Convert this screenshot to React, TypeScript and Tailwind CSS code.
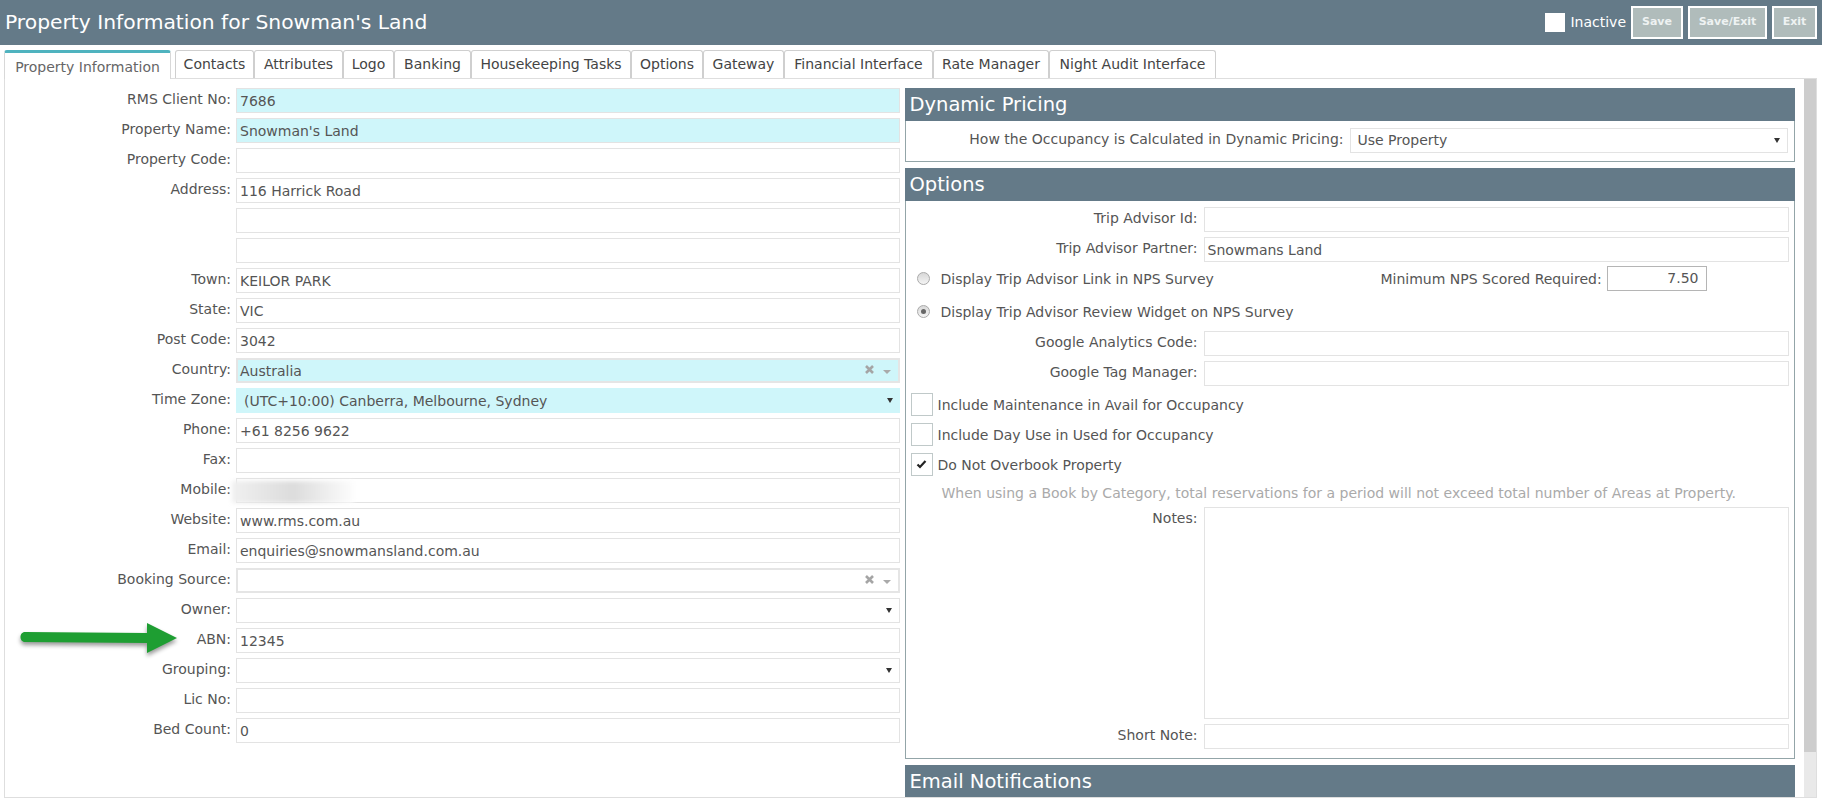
import { ReactNode } from "react";

const font = "font-['DejaVu_Sans','Liberation_Sans',sans-serif]";

const tabs = [
  { label: "Contacts", w: "w-[79px]" },
  { label: "Attributes", w: "w-[89px]" },
  { label: "Logo", w: "w-[51px]" },
  { label: "Banking", w: "w-[77px]" },
  { label: "Housekeeping Tasks", w: "w-[160px]" },
  { label: "Options", w: "w-[72px]" },
  { label: "Gateway", w: "w-[81px]" },
  { label: "Financial Interface", w: "w-[149px]" },
  { label: "Rate Manager", w: "w-[116px]" },
  { label: "Night Audit Interface", w: "w-[167px]" },
];

const Arrow = () => (
  <svg className="h-[5px] w-[6px]" viewBox="0 0 6 5">
    <path d="M0 0H6L3 5Z" fill="#333" />
  </svg>
);

function TextBox({ value = "", cyan = false }: { value?: string; cyan?: boolean }) {
  return (
    <div
      className={`h-[25px] flex-1 border border-[#e3e3e3] pl-[3px] pt-[2px] text-[14px] leading-[21px] text-[#555] ${cyan ? "bg-[#cff6fa]" : "bg-white"}`}
    >
      {value}
    </div>
  );
}

function SelectBox({ value = "", cyan = false }: { value?: string; cyan?: boolean }) {
  return (
    <div
      className={`flex h-[25px] flex-1 items-center justify-between pl-[8px] pr-[7px] text-[14px] text-[#555] ${cyan ? "bg-[#cff6fa]" : "border border-[#e3e3e3] bg-white"}`}
    >
      <span className="pt-[1px]">{value}</span>
      <Arrow />
    </div>
  );
}

function ClearSelect({ value = "", cyan = false }: { value?: string; cyan?: boolean }) {
  return (
    <div
      className={`flex h-[25px] flex-1 items-center justify-between border-2 border-[#e5e5e5] pl-[2px] pr-[7px] text-[14px] text-[#555] ${cyan ? "bg-[#cff6fa]" : "bg-white"}`}
    >
      <span className="pt-[2px]">{value}</span>
      <span className="flex items-center gap-[9px]">
        <svg className="mb-[3px] h-[9px] w-[9px]" viewBox="0 0 9 9">
          <path d="M1 1L8 8M8 1L1 8" stroke="#a5a5a5" strokeWidth="2.6" fill="none" />
        </svg>
        <svg className="mt-[3px] h-[4px] w-[8px]" viewBox="0 0 8 4">
          <path d="M0 0H8L4 4Z" fill="#aaa" />
        </svg>
      </span>
    </div>
  );
}

function Row({ label, children }: { label?: string; children: ReactNode }) {
  return (
    <div className="flex h-[25px] gap-[5px]">
      <div className="w-[226px] text-right text-[14px] leading-[22px] text-[#555]">{label}</div>
      {children}
    </div>
  );
}

function OptionRow({ label, children }: { label: string; children: ReactNode }) {
  return (
    <div className="flex h-[25px] gap-[6px]">
      <div className="w-[292px] text-right text-[14px] leading-[22px] text-[#555]">{label}</div>
      {children}
    </div>
  );
}

function Check({ label, checked = false }: { label: string; checked?: boolean }) {
  return (
    <div className="flex h-[24px] items-center gap-[5px] text-[14px] text-[#555]">
      <div className="flex h-[23px] w-[22px] items-center justify-center border border-[#c0c9c9] bg-white">
        {checked && (
          <svg className="h-[10px] w-[11px]" viewBox="0 0 11 10">
            <path d="M1.5 5.5L4 8L9.5 2" fill="none" stroke="#222" strokeWidth="2.2" />
          </svg>
        )}
      </div>
      <span className="pt-[2px]">{label}</span>
    </div>
  );
}

function Radio({ checked = false }: { checked?: boolean }) {
  return (
    <div className="flex h-[13px] w-[13px] items-center justify-center rounded-full border border-[#aaa] bg-gradient-to-b from-[#d8d8d8] to-[#f4f4f4]">
      {checked && <div className="h-[5px] w-[5px] rounded-full bg-[#666]" />}
    </div>
  );
}

function SectionTitle({ children }: { children: ReactNode }) {
  return (
    <div className="h-[33px] bg-[#647a88] pl-[5px] text-[19.5px] leading-[34px] text-white">{children}</div>
  );
}

export default function App() {
  return (
    <div className={`h-[805px] w-[1822px] overflow-hidden bg-white ${font}`}>
      {/* Title bar */}
      <div className="flex h-[45px] items-center justify-between bg-[#647a88] pl-[5px] pr-[5px]">
        <div className="text-[20.3px] text-white">Property Information for Snowman's Land</div>
        <div className="flex items-center">
          <div className="h-[19px] w-[20px] bg-white" />
          <div className="ml-[5px] text-[14px] text-white">Inactive</div>
          <div className="ml-[5px] flex h-[33px] w-[52px] items-center justify-center border-2 border-white bg-[#b0bcbb] text-[11px] font-bold text-[#eef2f2]">
            Save
          </div>
          <div className="ml-[5px] flex h-[33px] w-[79px] items-center justify-center border-2 border-white bg-[#b0bcbb] text-[11px] font-bold text-[#eef2f2]">
            Save/Exit
          </div>
          <div className="ml-[5px] flex h-[33px] w-[45px] items-center justify-center border-2 border-white bg-[#b0bcbb] text-[11px] font-bold text-[#eef2f2]">
            Exit
          </div>
        </div>
      </div>

      {/* Tabs */}
      <div className="relative z-10 ml-[4px] mt-[5px] flex h-[28px] items-start whitespace-nowrap">
        <div className="mr-[4px] h-[29px] w-[167px] rounded-t-[3px] border-x border-t-[3px] border-x-[#d8d8d8] border-t-[#4fb3bf] bg-white pt-[4px] text-center text-[14px] leading-[21px] text-[#666]">
          Property Information
        </div>
        {tabs.map((tab) => (
          <div
            key={tab.label}
            className={`h-[28px] rounded-t-[3px] border border-b-0 border-[#cfcfcf] bg-white pt-[3px] text-center text-[14px] leading-[21px] text-[#444] ${tab.w}`}
          >
            {tab.label}
          </div>
        ))}
      </div>

      {/* Main panel */}
      <div className="relative ml-[4px] flex h-[720px] w-[1813px] overflow-hidden border border-[#dedede]">
        <div className="flex w-[895px] flex-col gap-[5px] pt-[9px]">
          <Row label="RMS Client No:"><TextBox value="7686" cyan /></Row>
          <Row label="Property Name:"><TextBox value="Snowman's Land" cyan /></Row>
          <Row label="Property Code:"><TextBox /></Row>
          <Row label="Address:"><TextBox value="116 Harrick Road" /></Row>
          <Row><TextBox /></Row>
          <Row><TextBox /></Row>
          <Row label="Town:"><TextBox value="KEILOR PARK" /></Row>
          <Row label="State:"><TextBox value="VIC" /></Row>
          <Row label="Post Code:"><TextBox value="3042" /></Row>
          <Row label="Country:"><ClearSelect value="Australia" cyan /></Row>
          <Row label="Time Zone:"><SelectBox value="(UTC+10:00) Canberra, Melbourne, Sydney" cyan /></Row>
          <Row label="Phone:"><TextBox value="+61 8256 9622" /></Row>
          <Row label="Fax:"><TextBox /></Row>
          <Row label="Mobile:">
            <div className="relative flex flex-1">
              <TextBox />
              <div className="absolute left-[-4px] top-[3px] h-[22px] w-[122px] bg-gradient-to-r from-[#f0f0f0] via-[#dcdcdc] to-[#fdfdfd] blur-[2px]" />
            </div>
          </Row>
          <Row label="Website:"><TextBox value="www.rms.com.au" /></Row>
          <Row label="Email:"><TextBox value="enquiries@snowmansland.com.au" /></Row>
          <Row label="Booking Source:"><ClearSelect /></Row>
          <Row label="Owner:"><SelectBox /></Row>
          <Row label="ABN:"><TextBox value="12345" /></Row>
          <Row label="Grouping:"><SelectBox /></Row>
          <Row label="Lic No:"><TextBox /></Row>
          <Row label="Bed Count:"><TextBox value="0" /></Row>
        </div>

        {/* Right column */}
        <div className="ml-[5px] flex w-[891px] flex-col gap-[6px] pt-[9px]">
          <div>
            <SectionTitle>Dynamic Pricing</SectionTitle>
            <div className="flex h-[41px] gap-[6px] border border-t-0 border-[#93a5a8] pt-[7px]">
              <div className="w-[438px] text-right text-[14px] leading-[22px] text-[#555]">
                How the Occupancy is Calculated in Dynamic Pricing:
              </div>
              <div className="h-[25px] flex-1 pr-[6px]">
                <div className="flex h-[25px] items-center justify-between border border-[#e3e3e3] pl-[7px] pr-[7px] text-[14px] text-[#555]">
                  <span>Use Property</span>
                  <Arrow />
                </div>
              </div>
            </div>
          </div>

          <div>
            <SectionTitle>Options</SectionTitle>
            <div className="flex h-[558px] flex-col border border-t-0 border-[#93a5a8] pr-[5px] pt-[6px]">
              <div className="flex flex-col gap-[5px]">
                <OptionRow label="Trip Advisor Id:"><TextBox /></OptionRow>
                <OptionRow label="Trip Advisor Partner:"><TextBox value="Snowmans Land" /></OptionRow>
              </div>
              <div className="mt-[2px] flex h-[29px] items-center">
                <div className="ml-[11px]"><Radio /></div>
                <div className="ml-[11px] w-[440px] pt-[2px] text-[14px] text-[#555]">Display Trip Advisor Link in NPS Survey</div>
                <div className="w-[219px] whitespace-nowrap pt-[2px] text-right text-[14px] text-[#555]">Minimum NPS Scored Required:</div>
                <div className="ml-[7px] h-[25px] w-[100px] border border-[#b5b5b5] pr-[7px] text-right text-[14px] leading-[23px] text-[#555]">7.50</div>
              </div>
              <div className="mt-[4px] flex h-[29px] items-center">
                <div className="ml-[11px]"><Radio checked /></div>
                <div className="ml-[11px] pt-[2px] text-[14px] text-[#555]">Display Trip Advisor Review Widget on NPS Survey</div>
              </div>
              <div className="mt-[5px] flex flex-col gap-[5px]">
                <OptionRow label="Google Analytics Code:"><TextBox /></OptionRow>
                <OptionRow label="Google Tag Manager:"><TextBox /></OptionRow>
              </div>
              <div className="ml-[5px] mt-[6px] flex flex-col gap-[6px]">
                <Check label="Include Maintenance in Avail for Occupancy" />
                <Check label="Include Day Use in Used for Occupancy" />
                <Check label="Do Not Overbook Property" checked />
              </div>
              <div className="ml-[36px] mt-[7px] whitespace-nowrap text-[14px] leading-[20px] text-[#aaa]">
                When using a Book by Category, total reservations for a period will not exceed total number of Areas at Property.
              </div>
              <div className="mt-[4px] flex h-[212px] gap-[6px]">
                <div className="w-[292px] text-right text-[14px] leading-[22px] text-[#555]">Notes:</div>
                <div className="flex-1 border border-[#e3e3e3]" />
              </div>
              <div className="mt-[5px]">
                <OptionRow label="Short Note:"><TextBox /></OptionRow>
              </div>
            </div>
          </div>

          <SectionTitle>Email Notifications</SectionTitle>
        </div>

        {/* Scroll bar */}
        <div className="ml-[9px] flex w-[12px] flex-col bg-[#e9e9e9]">
          <div className="h-[673px] bg-[#cdcdcd]" />
        </div>

        {/* Annotation arrow */}
        <svg className="absolute left-[13px] top-[544px] h-[32px] w-[160px] drop-shadow-[0_3px_2px_rgba(0,0,0,0.4)]" viewBox="0 0 160 32">
          <path d="M7 9L129 10V0L159 15L129 30V20L7 19C1 19 1 9 7 9Z" fill="#1e9e32" />
        </svg>
      </div>
    </div>
  );
}
